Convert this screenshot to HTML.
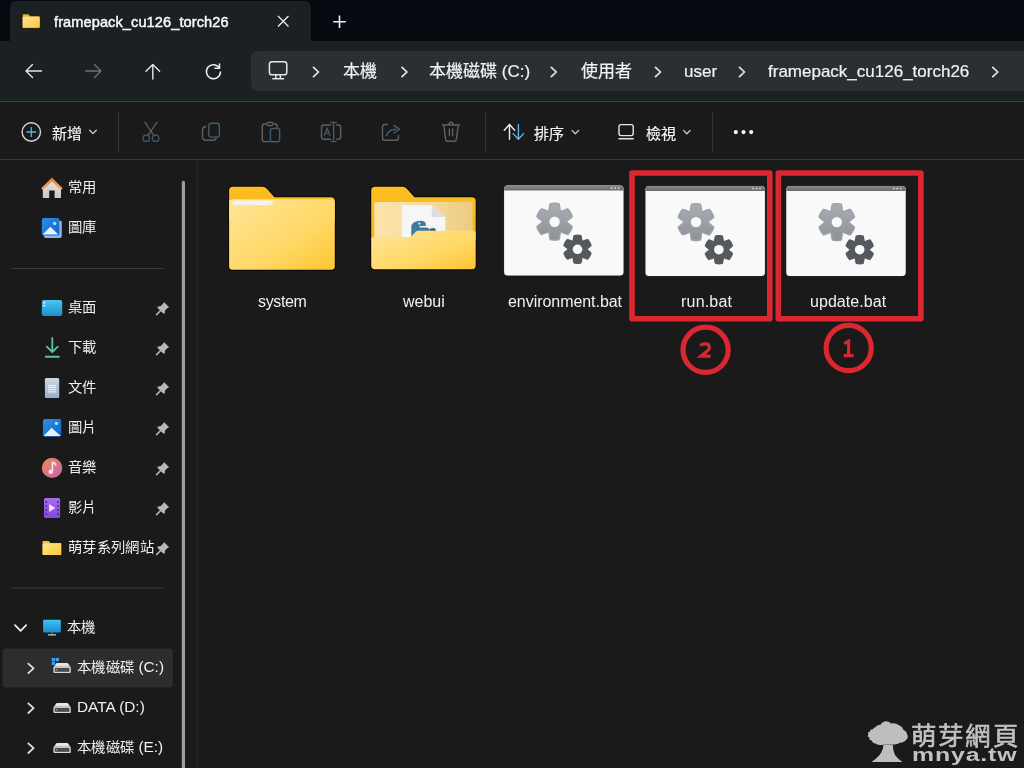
<!DOCTYPE html>
<html lang="zh-TW">
<head>
<meta charset="utf-8">
<style>
*{margin:0;padding:0;box-sizing:border-box;}
html,body{width:1024px;height:768px;overflow:hidden;background:#1a1a1a;font-family:"Liberation Sans",sans-serif;color:#fff;}
.abs{position:absolute;}
svg{position:absolute;overflow:visible;}
#titlebar{left:0;top:0;width:1024px;height:41px;background:#040a10;}
#tab{left:10px;top:1px;width:301px;height:41px;background:#1b2022;border-radius:6px 6px 0 0;}
#addrrow{left:0;top:41px;width:1024px;height:60px;background:#1b2022;}
#addrbox{left:251px;top:51px;width:790px;height:40px;background:#292f32;border-radius:6px;}
#toolbar{left:0;top:101px;width:1024px;height:59px;background:#1a1a1a;border-top:1px solid #3d4044;border-bottom:1px solid #383838;}
#sidebar{left:0;top:160px;width:195px;height:608px;background:#1a1a1a;}
#splitter{left:195px;top:160px;width:4px;height:608px;background:#202020;}
#content{left:199px;top:160px;width:825px;height:608px;background:#1a1a1a;}
.t{position:absolute;white-space:nowrap;color:#fff;will-change:transform;}
.bc{font-size:17px;line-height:20px;top:62px;color:#f2f2f2;-webkit-text-stroke:0.2px #f2f2f2;}
.tb{font-size:15px;line-height:18px;top:124.5px;color:#f6f6f6;-webkit-text-stroke:0.15px #f6f6f6;}
.sb{font-size:14px;line-height:18px;color:#f0f0f0;transform:translateY(0.2px) scaleX(1.025);transform-origin:0 0;}
.lbl{font-size:16px;line-height:18px;top:292.6px;color:#f0f0f0;}
.sep{position:absolute;width:1px;background:#353535;}
</style>
</head>
<body>
<div id="titlebar" class="abs"></div>
<div id="tab" class="abs"></div>
<div id="addrrow" class="abs"></div>
<div id="addrbox" class="abs"></div>
<div id="toolbar" class="abs"></div>
<div id="sidebar" class="abs"></div>
<div id="splitter" class="abs"></div>
<div id="content" class="abs"></div>

<!-- tab content -->
<svg style="left:0;top:0" width="1024" height="101">
  <defs><linearGradient id="tabfold" x1="0" y1="0" x2="1" y2="1"><stop offset="0" stop-color="#fde396"/><stop offset="1" stop-color="#f8c640"/></linearGradient></defs>
  <!-- tab folder icon -->
  <path d="M22.2 15 Q22.2 13.8 23.4 13.8 H28.2 L30.4 15.8 H38.9 Q40.1 15.8 40.1 17 V27.2 Q40.1 28.2 39.1 28.2 H23.2 Q22.2 28.2 22.2 27.2 Z" fill="#e9b53a" stroke="#1a1000" stroke-width="0.9"/>
  <rect x="22.6" y="16.8" width="17.1" height="11" rx="0.8" fill="url(#tabfold)"/>
  <!-- close X -->
  <path d="M278 16 L288.5 26.5 M288.5 16 L278 26.5" stroke="#f0f0f0" stroke-width="1.3"/>
  <!-- plus -->
  <path d="M339.5 15.5 V28 M333.2 21.8 H345.8" stroke="#f0f0f0" stroke-width="1.6"/>
  <!-- back -->
  <path d="M26 71 H41.5 M32.5 64.5 L26 71 L32.5 77.5" stroke="#e6e6e6" stroke-width="1.4" fill="none" stroke-linecap="round" stroke-linejoin="round"/>
  <!-- forward -->
  <path d="M85.5 71 H101 M94.5 64.5 L101 71 L94.5 77.5" stroke="#6e7174" stroke-width="1.4" fill="none" stroke-linecap="round" stroke-linejoin="round"/>
  <!-- up -->
  <path d="M152.8 64.5 V79 M146 71.3 L152.8 64.5 L159.6 71.3" stroke="#e6e6e6" stroke-width="1.4" fill="none" stroke-linecap="round" stroke-linejoin="round"/>
  <!-- refresh -->
  <path d="M220.45 71.89 A7 7 0 1 1 219.51 68.15" stroke="#ececec" stroke-width="1.5" fill="none" stroke-linecap="round"/>
  <path d="M219.51 63.9 V68.15 H214.91" stroke="#ececec" stroke-width="1.5" fill="none" stroke-linecap="round" stroke-linejoin="round"/>
  <!-- monitor -->
  <rect x="269.4" y="61.8" width="17.4" height="13" rx="2.6" stroke="#e6e6e6" stroke-width="1.5" fill="none"/>
  <path d="M275.8 75 V78.4 M280.4 75 V78.4 M272.8 78.7 H283.6" stroke="#e6e6e6" stroke-width="1.5" fill="none" stroke-linecap="round"/>
  <!-- chevrons -->
  <g stroke="#e8e8e8" stroke-width="1.7" fill="none" stroke-linecap="round" stroke-linejoin="round">
    <path d="M313.5 67.3 L318.5 72 L313.5 76.7"/>
    <path d="M402 67.3 L407 72 L402 76.7"/>
    <path d="M551.3 67.3 L556.3 72 L551.3 76.7"/>
    <path d="M655.5 67.3 L660.5 72 L655.5 76.7"/>
    <path d="M739.5 67.3 L744.5 72 L739.5 76.7"/>
    <path d="M992.8 67.3 L997.8 72 L992.8 76.7"/>
  </g>
</svg>
<div class="t" style="left:54px;top:13px;font-size:14.6px;line-height:18px;letter-spacing:0.08px;-webkit-text-stroke:0.45px #fafafa;color:#fafafa;">framepack_cu126_torch26</div>
<div class="t bc" style="left:343px;">本機</div>
<div class="t bc" style="left:429px;">本機磁碟 (C:)</div>
<div class="t bc" style="left:581px;">使用者</div>
<div class="t bc" style="left:684px;">user</div>
<div class="t bc" style="left:768px;">framepack_cu126_torch26</div>


<!-- toolbar -->
<svg style="left:0;top:0" width="1024" height="160">
  <circle cx="31.3" cy="132" r="9.2" stroke="#d6d6d6" stroke-width="1.4" fill="none"/>
  <path d="M31.3 127.6 V136.4 M26.9 132 H35.7" stroke="#4ab8f4" stroke-width="1.3" stroke-linecap="round"/>
  <g stroke="#cfcfcf" stroke-width="1.3" fill="none" stroke-linecap="round" stroke-linejoin="round">
    <path d="M89.7 130.2 L93 133.6 L96.3 130.2"/>
    <path d="M572 130.4 L575.3 133.8 L578.6 130.4"/>
    <path d="M683.6 130.4 L686.9 133.8 L690.2 130.4"/>
  </g>
  <rect x="118" y="112" width="1" height="40" fill="#343434"/>
  <rect x="485" y="112" width="1" height="40" fill="#343434"/>
  <rect x="712" y="112" width="1" height="40" fill="#343434"/>
  <!-- scissors -->
  <path d="M145 122.3 L153.5 135 M156.8 122.3 L148.3 135" stroke="#606060" stroke-width="1.3" fill="none" stroke-linecap="round"/>
  <circle cx="146.3" cy="138.2" r="3.2" stroke="#3e5667" stroke-width="1.4" fill="none"/>
  <circle cx="155.6" cy="138.2" r="3.2" stroke="#3e5667" stroke-width="1.4" fill="none"/>
  <!-- copy -->
  <path d="M205.5 126.5 Q202.5 127 202.5 130 V136.5 Q202.5 140.3 206.3 140.3 H213 Q215.8 140.3 216.3 137.3" stroke="#606060" stroke-width="1.4" fill="none" stroke-linecap="round"/>
  <rect x="208.8" y="123.3" width="10.6" height="13.8" rx="2.6" stroke="#425a6b" stroke-width="1.4" fill="none"/>
  <!-- paste -->
  <path d="M265.8 124 H264.5 Q262.3 124 262.3 126.3 V139.4 Q262.3 141.6 264.5 141.6 H269.5 M274.5 124 H275.2 Q277.2 124 277.2 126.2 V128" stroke="#606060" stroke-width="1.4" fill="none" stroke-linecap="round"/>
  <rect x="266.8" y="122.3" width="6.4" height="3.2" rx="1.5" stroke="#606060" stroke-width="1.3" fill="none"/>
  <rect x="270.4" y="128.5" width="9.2" height="13.2" rx="2" stroke="#425a6b" stroke-width="1.4" fill="none"/>
  <!-- rename -->
  <path d="M330.5 125 H324 Q321.5 125 321.5 127.5 V136.8 Q321.5 139.3 324 139.3 H330.5 M336.8 125 H338.2 Q340.7 125 340.7 127.5 V136.8 Q340.7 139.3 338.2 139.3 H336.8" stroke="#606060" stroke-width="1.4" fill="none" stroke-linecap="round"/>
  <path d="M333.6 122.5 V141.6 M331 122.5 H336.2 M331 141.6 H336.2" stroke="#425a6b" stroke-width="1.4" fill="none" stroke-linecap="round"/>
  <path d="M324.3 135.8 L327.1 128 L329.9 135.8 M325.3 133.2 H328.9" stroke="#425a6b" stroke-width="1.3" fill="none" stroke-linecap="round" stroke-linejoin="round"/>
  <!-- share -->
  <path d="M387.5 124.5 H385 Q382.5 124.5 382.5 127 V137.8 Q382.5 140.3 385 140.3 H396 Q398.5 140.3 398.5 137.8 V135.5" stroke="#606060" stroke-width="1.4" fill="none" stroke-linecap="round"/>
  <path d="M386.5 135.8 Q388 129.5 396 129.2 M394 125.5 L399.6 129.2 L394 133" stroke="#425a6b" stroke-width="1.5" fill="none" stroke-linecap="round" stroke-linejoin="round"/>
  <!-- delete -->
  <path d="M442.3 125 H459.6 M449 125 Q449 122.3 451 122.3 Q453 122.3 453 125 M443.8 125 L445.6 139.3 Q445.9 141.3 448 141.3 H454 Q456.1 141.3 456.4 139.3 L458.2 125 M449.4 129 V135.7 M452.6 129 V135.7" stroke="#606060" stroke-width="1.4" fill="none" stroke-linecap="round" stroke-linejoin="round"/>
  <!-- sort -->
  <path d="M509.5 124.5 V139.3 M504.3 130.2 L509.5 124.5 L514.7 130.2" stroke="#eeeeee" stroke-width="1.4" fill="none" stroke-linecap="round" stroke-linejoin="round"/>
  <path d="M518.4 124.5 V139.3 M513.2 133.6 L518.4 139.3 L523.6 133.6" stroke="#5db6ea" stroke-width="1.4" fill="none" stroke-linecap="round" stroke-linejoin="round"/>
  <!-- view -->
  <rect x="619" y="124.6" width="14.2" height="11" rx="2" stroke="#e6e6e6" stroke-width="1.4" fill="none"/>
  <path d="M619 138.7 H633.2" stroke="#e6e6e6" stroke-width="1.4" stroke-linecap="round"/>
  <!-- more -->
  <circle cx="735.8" cy="132.1" r="2.1" fill="#f4f4f4"/>
  <circle cx="743.5" cy="132.1" r="2.1" fill="#f4f4f4"/>
  <circle cx="751.2" cy="132.1" r="2.1" fill="#f4f4f4"/>
</svg>
<div class="t tb" style="left:52px;">新增</div>
<div class="t tb" style="left:534px;">排序</div>
<div class="t tb" style="left:646px;">檢視</div>

<!-- sidebar -->
<svg style="left:0;top:0" width="200" height="768">
  <defs>
    <linearGradient id="roof" x1="0" y1="0" x2="0" y2="1"><stop offset="0" stop-color="#e27a2c"/><stop offset="1" stop-color="#f4b080"/></linearGradient>
    <linearGradient id="house" x1="0" y1="0" x2="0" y2="1"><stop offset="0" stop-color="#e2e2e2"/><stop offset="1" stop-color="#c8c8c8"/></linearGradient>
    <linearGradient id="gal" x1="0" y1="0" x2="1" y2="1"><stop offset="0" stop-color="#2b8ee6"/><stop offset="1" stop-color="#1565c8"/></linearGradient>
    <linearGradient id="desk" x1="0" y1="0" x2="0" y2="1"><stop offset="0" stop-color="#4cc6f0"/><stop offset="1" stop-color="#1b8fd2"/></linearGradient>
    <linearGradient id="doc" x1="0" y1="0" x2="0" y2="1"><stop offset="0" stop-color="#d0d8e2"/><stop offset="1" stop-color="#98aec8"/></linearGradient>
    <linearGradient id="mus" x1="0" y1="0" x2="1" y2="1"><stop offset="0" stop-color="#ef8a50"/><stop offset="1" stop-color="#c462b4"/></linearGradient>
    <linearGradient id="vid" x1="0" y1="0" x2="0" y2="1"><stop offset="0" stop-color="#a36ef0"/><stop offset="1" stop-color="#8446dc"/></linearGradient>
    <linearGradient id="fold" x1="0" y1="0" x2="1" y2="1"><stop offset="0" stop-color="#ffe48e"/><stop offset="1" stop-color="#fbc930"/></linearGradient>
    <linearGradient id="mon" x1="0" y1="0" x2="0" y2="1"><stop offset="0" stop-color="#3ec6f2"/><stop offset="1" stop-color="#1a8ad0"/></linearGradient>
    <g id="pin"><path d="M163.9 0 L169.2 5.3 L167.6 6 L165 8.6 L164.8 11.6 L163.3 11.6 L157.6 5.9 L157.6 4.4 L160.6 4.2 L163.2 1.6 Z" fill="#b3b7bb"/><path d="M160.4 8.8 L156.6 12.6" stroke="#b3b7bb" stroke-width="1.5" stroke-linecap="round"/></g>
    <g id="drive"><path d="M53.8 4 L56.6 0.3 H67.6 L70.4 4 Z" fill="#e6e6e6"/><rect x="53.4" y="4" width="17.4" height="6.3" rx="1" fill="#d8d8d8"/><rect x="54.8" y="5.1" width="14.6" height="3.9" fill="#4a4c4a"/><circle cx="56.6" cy="7" r="0.8" fill="#8fc890"/></g>
  </defs>
  <!-- scrollbar -->
  <rect x="181.8" y="180.8" width="3.2" height="600" rx="1.6" fill="#9e9e9e"/>
  <!-- separators -->
  <rect x="11" y="268" width="152" height="1" fill="#3a3a3a"/>
  <rect x="11" y="587.5" width="152" height="1" fill="#3a3a3a"/>
  <!-- highlight -->
  <rect x="2.5" y="648.4" width="170.4" height="39.2" rx="4" fill="#2d2d2d"/>
  <!-- home -->
  <path d="M42.8 188.5 L51.9 180.6 L61 188.5 V197.9 H54.6 V190.4 H49.2 V197.9 H42.8 Z" fill="url(#house)"/>
  <path d="M41.2 188.3 L51.9 177.6 L62.6 188.3 L60.8 190.2 L51.9 181.6 L43 190.2 Z" fill="url(#roof)"/>
  <!-- gallery -->
  <rect x="43.8" y="220.5" width="18" height="17.6" rx="2" fill="#8db8e8"/>
  <rect x="41.8" y="218" width="17.6" height="17.4" rx="2" fill="url(#gal)"/>
  <path d="M42.6 234.6 L50.3 226.7 L58.4 234.6 Z" fill="#e6f2fc"/>
  <circle cx="54.6" cy="223.4" r="1.7" fill="#a4e4fa"/>
  <!-- desktop -->
  <rect x="41.8" y="300" width="20.4" height="16" rx="2" fill="url(#desk)"/>
  <rect x="43.2" y="302" width="2.2" height="1.4" fill="#e8f8ff"/>
  <rect x="43.2" y="305" width="2.2" height="1.4" fill="#e8f8ff"/>
  <!-- download -->
  <path d="M52.3 338 V352 M46.8 346.6 L52.3 352 L57.8 346.6" stroke="#58c2a4" stroke-width="1.8" fill="none" stroke-linecap="round" stroke-linejoin="round"/>
  <rect x="44.8" y="355.8" width="15" height="2" rx="1" fill="#58c2a4"/>
  <!-- documents -->
  <rect x="44.9" y="378" width="14.3" height="20" rx="1.5" fill="url(#doc)"/>
  <rect x="48" y="385" width="8" height="1" fill="#f4f8fc"/><rect x="48" y="387" width="8" height="1" fill="#f4f8fc"/><rect x="48" y="389.2" width="8" height="1" fill="#f4f8fc"/><rect x="48" y="391.4" width="8" height="1" fill="#f4f8fc"/>
  <!-- pictures -->
  <rect x="43" y="419" width="18.2" height="17.7" rx="2" fill="url(#gal)"/>
  <path d="M43.6 436 L51.6 427.8 L60.6 436 Z" fill="#e6f2fc"/>
  <circle cx="56.4" cy="423.4" r="1.7" fill="#a4e4fa"/>
  <!-- music -->
  <circle cx="52.1" cy="467.9" r="10.2" fill="url(#mus)"/>
  <path d="M52.4 462 V471.5" stroke="#fbe8ee" stroke-width="1.6"/>
  <circle cx="50.7" cy="471.7" r="2.2" fill="#fbe8ee"/>
  <path d="M52.4 462 Q55 462.5 56 465.5" stroke="#fbe8ee" stroke-width="1.6" fill="none"/>
  <!-- video -->
  <rect x="44" y="498" width="16.1" height="19.9" rx="1.6" fill="url(#vid)"/>
  <g fill="#5b2aa8"><rect x="45.3" y="501" width="1.8" height="1.8"/><rect x="45.3" y="505.2" width="1.8" height="1.8"/><rect x="45.3" y="509.2" width="1.8" height="1.8"/><rect x="45.3" y="513.2" width="1.8" height="1.8"/><rect x="57" y="501" width="1.8" height="1.8"/><rect x="57" y="505.2" width="1.8" height="1.8"/><rect x="57" y="509.2" width="1.8" height="1.8"/><rect x="57" y="513.2" width="1.8" height="1.8"/></g>
  <path d="M49.2 504 L55.2 508 L49.2 512 Z" fill="#f6e6fc"/>
  <!-- folder -->
  <path d="M42.6 541 H48.5 L50.5 543 H61.2 V555 H42.6 Z" fill="#f6c340"/>
  <rect x="42.6" y="543.5" width="18.6" height="11.5" rx="0.8" fill="url(#fold)"/>
  <!-- pins -->
  <use href="#pin" y="302"/><use href="#pin" y="342"/><use href="#pin" y="382"/><use href="#pin" y="422"/><use href="#pin" y="462"/><use href="#pin" y="502"/><use href="#pin" y="542"/>
  <!-- tree chevrons -->
  <path d="M15 625.2 L20.6 630.8 L26.2 625.2" stroke="#ececec" stroke-width="1.8" fill="none" stroke-linecap="round" stroke-linejoin="round"/>
  <g stroke="#e0e0e0" stroke-width="1.8" fill="none" stroke-linecap="round" stroke-linejoin="round">
    <path d="M28.3 663.6 L33.6 668.4 L28.3 673.2"/>
    <path d="M28.3 703.4 L33.6 708.2 L28.3 713"/>
    <path d="M28.3 743.4 L33.6 748.2 L28.3 753"/>
  </g>
  <!-- this PC -->
  <rect x="43.1" y="619.8" width="17.7" height="12.8" rx="1" fill="url(#mon)"/>
  <rect x="47.9" y="634.2" width="8.2" height="1.3" rx="0.6" fill="#d6d6d6"/>
  <rect x="51.5" y="632.6" width="1" height="1.8" fill="#9a9a9a"/>
  <!-- drives -->
  <use href="#drive" y="662.8"/>
  <g fill="#3aa0f0"><rect x="51.7" y="658" width="3.3" height="3.2"/><rect x="55.6" y="658" width="3.3" height="3.2"/><rect x="51.7" y="661.7" width="3.3" height="3.2"/></g>
  <use href="#drive" y="702.8"/>
  <use href="#drive" y="742.8"/>
</svg>
<div class="t sb" style="left:68px;top:178px;">常用</div>
<div class="t sb" style="left:68px;top:218px;">圖庫</div>
<div class="t sb" style="left:68px;top:298px;">桌面</div>
<div class="t sb" style="left:68px;top:338px;">下載</div>
<div class="t sb" style="left:68px;top:378px;">文件</div>
<div class="t sb" style="left:68px;top:418px;">圖片</div>
<div class="t sb" style="left:68px;top:458px;">音樂</div>
<div class="t sb" style="left:68px;top:498px;">影片</div>
<div class="t sb" style="left:68px;top:538px;width:86px;overflow:hidden;">萌芽系列網站</div>
<div class="t sb" style="left:67.4px;top:618px;">本機</div>
<div class="t sb" style="left:77.4px;top:658px;">本機磁碟 <span style="font-size:15px">(C:)</span></div>
<div class="t sb" style="left:77.4px;top:698px;font-size:15px;">DATA (D:)</div>
<div class="t sb" style="left:77.4px;top:738px;">本機磁碟 <span style="font-size:15px">(E:)</span></div>

<!-- content -->
<svg style="left:0;top:0" width="1024" height="768">
  <defs>
    <linearGradient id="ffront" x1="0" y1="0" x2="1" y2="1"><stop offset="0" stop-color="#ffe597"/><stop offset="0.6" stop-color="#ffd866"/><stop offset="1" stop-color="#fcc530"/></linearGradient>
    <linearGradient id="fback" x1="0" y1="0" x2="0" y2="1"><stop offset="0" stop-color="#fcbf22"/><stop offset="1" stop-color="#f4b41a"/></linearGradient>
    <linearGradient id="finner" x1="0" y1="0" x2="1" y2="0"><stop offset="0" stop-color="#fbe3ab"/><stop offset="0.5" stop-color="#f6dca0"/><stop offset="1" stop-color="#eccb7e"/></linearGradient>
    <linearGradient id="paper" x1="0" y1="0" x2="1" y2="0"><stop offset="0" stop-color="#f0f0ee"/><stop offset="0.85" stop-color="#f4f4f0"/><stop offset="1" stop-color="#fde8a0"/></linearGradient>
    <linearGradient id="gearA" x1="0" y1="0" x2="0" y2="1"><stop offset="0" stop-color="#a9aeb4"/><stop offset="1" stop-color="#8c9298"/></linearGradient>
    <linearGradient id="wtitle" x1="0" y1="0" x2="0" y2="1"><stop offset="0" stop-color="#8a8884"/><stop offset="1" stop-color="#6e6c6a"/></linearGradient>
    
    <g id="batwin">
      <rect x="-0.5" y="-0.5" width="120.4" height="91" rx="4" fill="#3a3a3a" opacity="0.6"/>
      <rect x="0" y="0" width="119.4" height="90" rx="3.5" fill="#f9f9f9"/>
      <path d="M0 3.5 Q0 0 3.5 0 H115.9 Q119.4 0 119.4 3.5 V5 H0 Z" fill="url(#wtitle)"/>
      <circle cx="107.5" cy="2.6" r="0.9" fill="#d8d8d8"/><circle cx="111" cy="2.6" r="0.9" fill="#d8d8d8"/><circle cx="114.5" cy="2.6" r="0.9" fill="#d8d8d8"/>
      <path d="M62.10 36.10 L62.42 35.68 L63.24 35.21 L63.91 34.69 L64.61 34.12 L65.40 33.47 L66.30 32.74 L67.33 31.90 L68.19 31.03 L68.00 30.41 L67.79 29.81 L67.56 29.21 L67.31 28.62 L67.04 28.03 L66.75 27.46 L66.43 26.90 L66.10 26.35 L65.75 25.81 L65.39 25.28 L65.00 24.77 L64.60 24.27 L64.17 23.79 L63.74 23.32 L62.55 23.63 L61.31 24.10 L60.23 24.51 L59.27 24.87 L58.43 25.19 L57.64 25.51 L56.82 25.98 L56.30 26.05 L56.10 25.57 L56.10 24.62 L55.98 23.78 L55.84 22.89 L55.68 21.88 L55.49 20.74 L55.28 19.43 L54.95 18.25 L54.33 18.10 L53.70 17.98 L53.06 17.88 L52.42 17.80 L51.78 17.74 L51.14 17.71 L50.50 17.70 L49.86 17.71 L49.22 17.74 L48.58 17.80 L47.94 17.88 L47.30 17.98 L46.67 18.10 L46.05 18.25 L45.72 19.43 L45.51 20.74 L45.32 21.88 L45.16 22.89 L45.02 23.78 L44.90 24.62 L44.90 25.57 L44.70 26.05 L44.18 25.98 L43.36 25.51 L42.57 25.19 L41.73 24.87 L40.77 24.51 L39.69 24.10 L38.45 23.63 L37.26 23.32 L36.83 23.79 L36.40 24.27 L36.00 24.77 L35.61 25.28 L35.25 25.81 L34.90 26.35 L34.57 26.90 L34.25 27.46 L33.96 28.03 L33.69 28.62 L33.44 29.21 L33.21 29.81 L33.00 30.41 L32.81 31.03 L33.67 31.90 L34.70 32.74 L35.60 33.47 L36.39 34.12 L37.09 34.69 L37.76 35.21 L38.58 35.68 L38.90 36.10 L38.58 36.52 L37.76 36.99 L37.09 37.51 L36.39 38.08 L35.60 38.73 L34.70 39.46 L33.67 40.30 L32.81 41.17 L33.00 41.79 L33.21 42.39 L33.44 42.99 L33.69 43.58 L33.96 44.17 L34.25 44.74 L34.57 45.30 L34.90 45.85 L35.25 46.39 L35.61 46.92 L36.00 47.43 L36.40 47.93 L36.83 48.41 L37.26 48.88 L38.45 48.57 L39.69 48.10 L40.77 47.69 L41.73 47.33 L42.57 47.01 L43.36 46.69 L44.18 46.22 L44.70 46.15 L44.90 46.63 L44.90 47.58 L45.02 48.42 L45.16 49.31 L45.32 50.32 L45.51 51.46 L45.72 52.77 L46.05 53.95 L46.67 54.10 L47.30 54.22 L47.94 54.32 L48.58 54.40 L49.22 54.46 L49.86 54.49 L50.50 54.50 L51.14 54.49 L51.78 54.46 L52.42 54.40 L53.06 54.32 L53.70 54.22 L54.33 54.10 L54.95 53.95 L55.28 52.77 L55.49 51.46 L55.68 50.32 L55.84 49.31 L55.98 48.42 L56.10 47.58 L56.10 46.63 L56.30 46.15 L56.82 46.22 L57.64 46.69 L58.43 47.01 L59.27 47.33 L60.23 47.69 L61.31 48.10 L62.55 48.57 L63.74 48.88 L64.17 48.41 L64.60 47.93 L65.00 47.43 L65.39 46.92 L65.75 46.39 L66.10 45.85 L66.43 45.30 L66.75 44.74 L67.04 44.17 L67.31 43.58 L67.56 42.99 L67.79 42.39 L68.00 41.79 L68.19 41.17 L67.33 40.30 L66.30 39.46 L65.40 38.73 L64.61 38.08 L63.91 37.51 L63.24 36.99 L62.42 36.52 Z" fill="url(#gearA)" stroke="#9ca1a7" stroke-width="1.4" stroke-linejoin="round"/>
      <circle cx="50.5" cy="36.1" r="5.2" fill="#f9f9f9"/>
      <path d="M82.40 63.70 L82.55 63.38 L83.19 63.02 L83.71 62.62 L84.23 62.18 L84.81 61.69 L85.46 61.14 L86.20 60.51 L86.86 59.84 L86.71 59.37 L86.56 58.91 L86.38 58.46 L86.19 58.01 L85.98 57.56 L85.76 57.13 L85.52 56.70 L85.27 56.28 L85.01 55.87 L84.73 55.47 L84.43 55.08 L84.12 54.70 L83.80 54.33 L83.47 53.97 L82.57 54.21 L81.65 54.54 L80.84 54.83 L80.13 55.08 L79.49 55.31 L78.89 55.57 L78.25 55.93 L77.90 55.91 L77.70 55.61 L77.70 54.88 L77.62 54.23 L77.50 53.56 L77.36 52.82 L77.21 51.98 L77.04 51.02 L76.79 50.12 L76.31 50.01 L75.83 49.91 L75.35 49.84 L74.86 49.78 L74.38 49.73 L73.89 49.71 L73.40 49.70 L72.91 49.71 L72.42 49.73 L71.94 49.78 L71.45 49.84 L70.97 49.91 L70.49 50.01 L70.01 50.12 L69.76 51.02 L69.59 51.98 L69.44 52.82 L69.30 53.56 L69.18 54.23 L69.10 54.88 L69.10 55.61 L68.90 55.91 L68.55 55.93 L67.91 55.57 L67.31 55.31 L66.67 55.08 L65.96 54.83 L65.15 54.54 L64.23 54.21 L63.33 53.97 L63.00 54.33 L62.68 54.70 L62.37 55.08 L62.07 55.47 L61.79 55.87 L61.53 56.28 L61.28 56.70 L61.04 57.13 L60.82 57.56 L60.61 58.01 L60.42 58.46 L60.24 58.91 L60.09 59.37 L59.94 59.84 L60.60 60.51 L61.34 61.14 L61.99 61.69 L62.57 62.18 L63.09 62.62 L63.61 63.02 L64.25 63.38 L64.40 63.70 L64.25 64.02 L63.61 64.38 L63.09 64.78 L62.57 65.22 L61.99 65.71 L61.34 66.26 L60.60 66.89 L59.94 67.56 L60.09 68.03 L60.24 68.49 L60.42 68.94 L60.61 69.39 L60.82 69.84 L61.04 70.27 L61.28 70.70 L61.53 71.12 L61.79 71.53 L62.07 71.93 L62.37 72.32 L62.68 72.70 L63.00 73.07 L63.33 73.43 L64.23 73.19 L65.15 72.86 L65.96 72.57 L66.67 72.32 L67.31 72.09 L67.91 71.83 L68.55 71.47 L68.90 71.49 L69.10 71.79 L69.10 72.52 L69.18 73.17 L69.30 73.84 L69.44 74.58 L69.59 75.42 L69.76 76.38 L70.01 77.28 L70.49 77.39 L70.97 77.49 L71.45 77.56 L71.94 77.62 L72.42 77.67 L72.91 77.69 L73.40 77.70 L73.89 77.69 L74.38 77.67 L74.86 77.62 L75.35 77.56 L75.83 77.49 L76.31 77.39 L76.79 77.28 L77.04 76.38 L77.21 75.42 L77.36 74.58 L77.50 73.84 L77.62 73.17 L77.70 72.52 L77.70 71.79 L77.90 71.49 L78.25 71.47 L78.89 71.83 L79.49 72.09 L80.13 72.32 L80.84 72.57 L81.65 72.86 L82.57 73.19 L83.47 73.43 L83.80 73.07 L84.12 72.70 L84.43 72.32 L84.73 71.93 L85.01 71.53 L85.27 71.12 L85.52 70.70 L85.76 70.27 L85.98 69.84 L86.19 69.39 L86.38 68.94 L86.56 68.49 L86.71 68.03 L86.86 67.56 L86.20 66.89 L85.46 66.26 L84.81 65.71 L84.23 65.22 L83.71 64.78 L83.19 64.38 L82.55 64.02 Z" fill="#55595e" stroke="#55595e" stroke-width="1.4" stroke-linejoin="round"/>
      <circle cx="73.4" cy="63.7" r="4.8" fill="#f9f9f9"/>
    </g>
  </defs>
  <!-- system folder -->
  <path d="M229.1 190.5 Q229.1 186.8 232.8 186.8 H262.5 Q265 186.8 266.6 188.6 L274.5 197.3 H331 Q334.8 197.3 334.8 201.1 V266.2 Q334.8 269.8 331.2 269.8 H232.6 Q229.1 269.8 229.1 266.2 Z" fill="none" stroke="#0e0b05" stroke-width="2.2"/>
  <path d="M229.1 190.5 Q229.1 186.8 232.8 186.8 H262.5 Q265 186.8 266.6 188.6 L274.5 197.3 H331 Q334.8 197.3 334.8 201.1 V220 H229.1 Z" fill="url(#fback)"/>
  <path d="M229.1 202.5 Q229.1 199.3 232.3 199.3 H331.6 Q334.8 199.3 334.8 202.5 V266.2 Q334.8 269.8 331.2 269.8 H232.6 Q229.1 269.8 229.1 266.2 Z" fill="url(#ffront)"/>
  <rect x="232.6" y="200.4" width="41.6" height="4.6" rx="2" fill="url(#paper)"/>
  <!-- webui folder -->
  <path d="M371.2 190.5 Q371.2 186.8 374.9 186.8 H402.5 Q405 186.8 406.6 188.6 L414.5 197.3 H472 Q475.7 197.3 475.7 201 V265.6 Q475.7 269.3 472 269.3 H374.9 Q371.2 269.3 371.2 265.6 Z" fill="none" stroke="#0e0b05" stroke-width="2.2"/>
  <path d="M371.2 190.5 Q371.2 186.8 374.9 186.8 H402.5 Q405 186.8 406.6 188.6 L414.5 197.3 H472 Q475.7 197.3 475.7 201 V240 H371.2 Z" fill="url(#fback)"/>
  <rect x="374.3" y="202" width="98.3" height="36" rx="1.5" fill="url(#finner)"/>
  <path d="M401.8 205.3 H431.8 L445.4 217.1 V240 H401.8 Z" fill="#f6f6f6"/>
  <path d="M431.8 205.3 V217.1 H445.4 Z" fill="#dcdde2"/>
  <path d="M420.5 220.8 Q411.5 220.8 411.3 227.5 V236 H429.5 V230 Q429.5 227.5 426 227.5 H419.5 V226 H425.8 V224.5 Q425.8 220.8 420.5 220.8 Z" fill="#3f7aa3"/>
  <path d="M429.5 229 Q432 227.8 434.8 228.2 Q436 229.5 436 232 V236 H429.5 Z" fill="#4a6272"/>
  <circle cx="419.4" cy="223.6" r="1.1" fill="#f6f6f6"/>
  <path d="M371.2 240 Q371.2 236.9 374.3 236.9 H408.5 Q411 236.9 412.6 235.3 L414.5 233 Q416 230.7 418.5 230.7 H472.5 Q475.7 230.7 475.7 234 V265.6 Q475.7 269.3 472 269.3 H374.9 Q371.2 269.3 371.2 265.6 Z" fill="url(#ffront)"/>
  <!-- bat windows -->
  <use href="#batwin" x="504.1" y="185.6"/>
  <use href="#batwin" x="645.5" y="186"/>
  <use href="#batwin" x="786.3" y="186"/>
  <!-- red rectangles -->
  <rect x="632" y="173" width="137.8" height="145.8" rx="0.3" stroke="#dc2630" stroke-width="5.6" fill="none"/>
  <rect x="778.3" y="173" width="142.6" height="145.8" rx="0.3" stroke="#dc2630" stroke-width="5.6" fill="none"/>
  <!-- circles -->
  <circle cx="705.6" cy="349.8" r="22.6" stroke="#dc2630" stroke-width="5.2" fill="none"/>
  <circle cx="848.7" cy="348" r="22.6" stroke="#dc2630" stroke-width="5.2" fill="none"/>
  <path d="M700.6 345.8 Q701.5 343.8 705.2 343.8 Q709.4 343.8 709.4 347.4 Q709.4 349.6 706.5 351.8 L701 356.2 H710.6" stroke="#da262e" stroke-width="3.3" fill="none" stroke-linecap="butt" stroke-linejoin="miter"/>
  <path d="M848.6 355.3 V341.2 L844.2 343.6 M843.8 355.6 H853.6" stroke="#da262e" stroke-width="3.2" fill="none" stroke-linejoin="miter"/>
</svg>


<div class="t lbl" style="left:258.4px;letter-spacing:-0.35px;">system</div>
<div class="t lbl" style="left:403.2px;">webui</div>
<div class="t lbl" style="left:508.4px;letter-spacing:-0.05px;">environment.bat</div>
<div class="t lbl" style="left:680.8px;letter-spacing:0.2px;">run.bat</div>
<div class="t lbl" style="left:809.6px;letter-spacing:0.05px;">update.bat</div>

<!-- watermark -->
<svg style="left:0;top:0" width="1024" height="768">
  <path d="M883.5 744.5 Q883 751 879.5 755 Q876 759 871.5 762 H902.5 Q897.5 758.5 895 755 Q892.8 750.5 892.8 744.5 Z" fill="#bebebe"/>
  <path d="M875 727.5 Q877 724.6 880.5 724.8 Q882.5 721 886.5 721.2 Q889.5 721.4 891 723.5 Q895.5 722.5 898.5 725 Q902.5 726.5 903.5 730 Q906.8 731 907 734.5 Q908.8 737 906.5 739.5 Q904.5 742.5 900 742.8 Q897 745 892 744.3 L884 744.5 Q879 746 875.5 743.5 Q872.5 743.5 871.8 740.5 Q868.5 740 869.5 737.5 Q866.5 736.5 868.5 734.5 Q866.8 732 870 731.8 Q869.5 729 873 729.2 Q873.5 727.8 875 727.5 Z" fill="#bebebe"/>
</svg>
<div class="t" style="left:910.5px;top:720.5px;font-size:25.5px;line-height:30px;letter-spacing:1.2px;color:#c2c2c2;-webkit-text-stroke:0.6px #c2c2c2;">萌芽網頁</div>
<div class="t" style="left:911.5px;top:745px;font-size:17.5px;line-height:20px;letter-spacing:0.6px;color:#c2c2c2;font-weight:bold;transform:scaleX(1.42);transform-origin:0 0;">mnya.tw</div>
</body>
</html>
